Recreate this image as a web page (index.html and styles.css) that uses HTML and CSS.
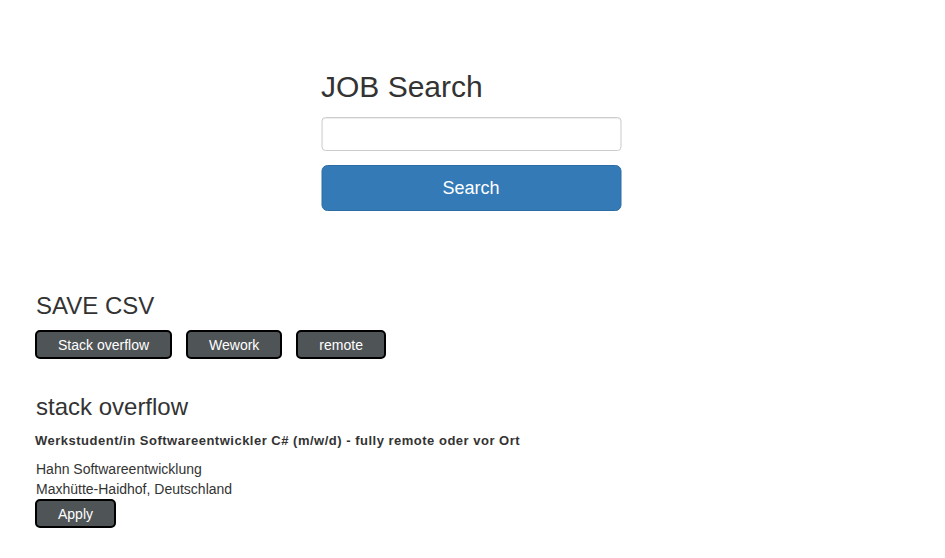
FILE: index.html
```html
<!DOCTYPE html>
<html>
<head>
<meta charset="utf-8">
<link rel="stylesheet" href="styles.css">
</head>
<body>
<div class="search">
  <h1 class="title">JOB Search</h1>
  <input class="search-input" type="text">
  <button class="btn-primary">Search</button>
</div>
<div class="section">
  <h3 class="sub">SAVE CSV</h3>
  <div class="btn-row">
    <button class="btn-dark">Stack overflow</button>
    <button class="btn-dark">Wework</button>
    <button class="btn-dark">remote</button>
  </div>
</div>
<div class="section results">
  <h3 class="sub">stack overflow</h3>
  <div class="job">
    <div class="job-title">Werkstudent/in Softwareentwickler C# (m/w/d) - fully remote oder vor Ort</div>
    <div class="job-company">Hahn Softwareentwicklung</div>
    <div class="job-location">Maxhütte-Haidhof, Deutschland</div>
    <button class="btn-dark btn-apply">Apply</button>
  </div>
</div>
</body>
</html>
```
FILE: styles.css
```css
* { box-sizing: border-box; }
html, body { margin: 0; padding: 0; }
body {
  font-family: "Liberation Sans", Arial, Helvetica, sans-serif;
  font-size: 14px;
  line-height: 20px;
  color: #333;
  background: #fff;
}
.search {
  width: 300px;
  margin: 0 auto;
  padding-top: 70px;
  display: flex;
  flex-direction: column;
  transform: translateX(-1.5px);
}
.title {
  margin: 0 0 14px 0;
  font-size: 30px;
  line-height: 33px;
  font-weight: 400;
}
.search-input {
  height: 34px;
  border: 1px solid #ccc;
  border-radius: 4px;
  box-shadow: inset 0 1px 1px rgba(0,0,0,.075);
  margin: 0 0 14px 0;
  padding: 6px 12px;
  font-family: inherit;
  font-size: 14px;
}
.btn-primary {
  height: 46px;
  background: #337ab7;
  border: 1px solid #2e6da4;
  border-radius: 6px;
  color: #fff;
  font-family: inherit;
  font-size: 18px;
  padding: 0;
}
.section {
  padding-left: 36px;
  padding-top: 82px;
}
.results { padding-top: 35px; }
.sub {
  margin: 0 0 11px 0;
  font-size: 24px;
  line-height: 26px;
  font-weight: 400;
}
.btn-row {
  display: flex;
  gap: 14px;
  margin-left: -1px;
}
.btn-dark {
  height: 29px;
  padding: 0 21px;
  background: #4f5457;
  color: #fff;
  border: 2px solid #000;
  border-radius: 5px;
  font-family: inherit;
  font-size: 14px;
}
.job-title {
  font-weight: 700;
  font-size: 13px;
  letter-spacing: 0.5px;
  line-height: 20px;
  margin: 2px 0 8px -1px;
}
.btn-apply {
  margin-left: -1px;
  height: 29px;
}
```
